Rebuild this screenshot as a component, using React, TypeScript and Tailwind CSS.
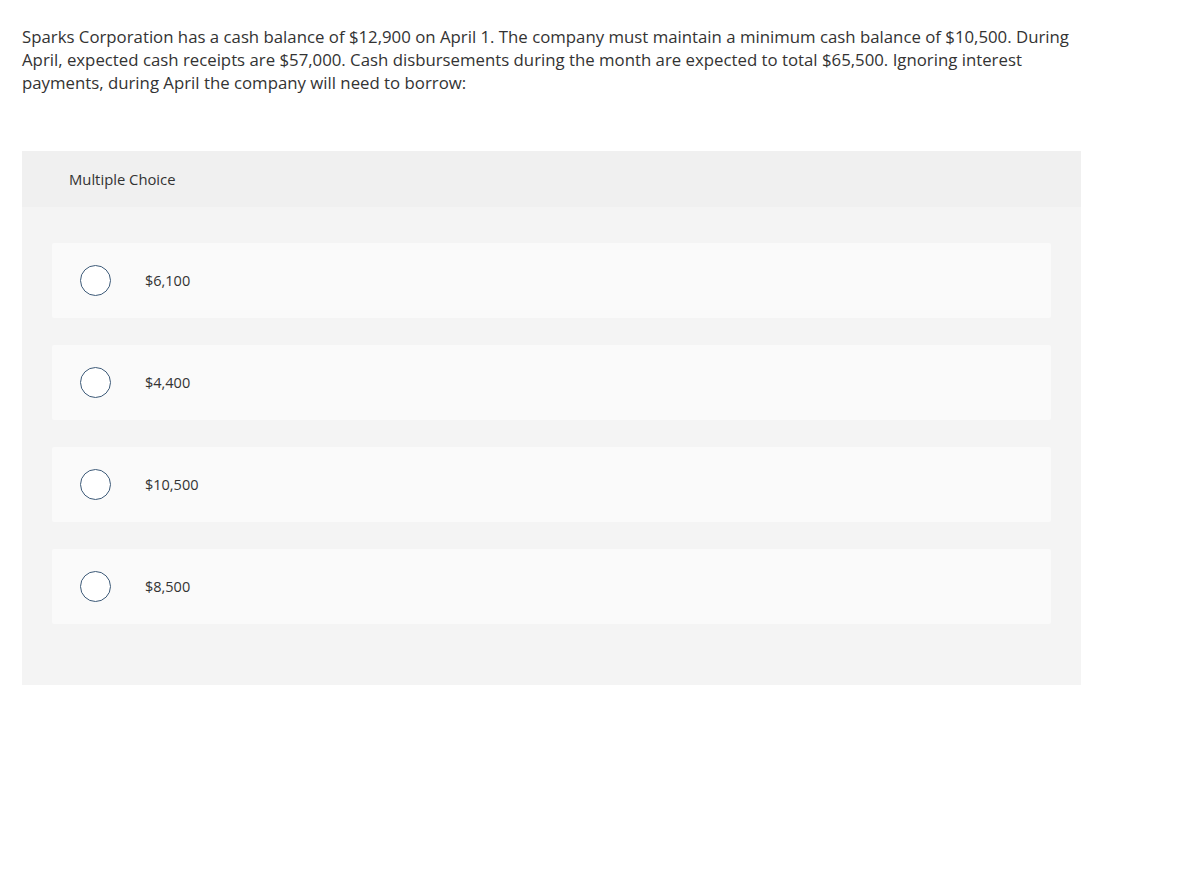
import React from 'react';

const options = ['$6,100', '$4,400', '$10,500', '$8,500'];

export default function App() {
  return (
    <div className="min-h-screen bg-white text-[#333] font-['Open_Sans',sans-serif]">
      <div className="pl-[22px] pr-[60px] pt-[25px]">
        <p className="text-[16.8px] leading-[23px] whitespace-nowrap">
          Sparks Corporation has a cash balance of $12,900 on April 1. The company must maintain a minimum cash balance of $10,500. During
          <br />
          April, expected cash receipts are $57,000. Cash disbursements during the month are expected to total $65,500. Ignoring interest
          <br />
          payments, during April the company will need to borrow:
        </p>
      </div>

      <div className="ml-[22px] mt-[57px] w-[1059px] bg-[#f4f4f4]">
        <div className="h-[56px] bg-[#f0f0f0] flex items-center pl-[47px] text-[14.8px]">Multiple Choice</div>
        <div className="px-[30px] pt-[36px] pb-[61px] flex flex-col gap-[27px]">
          {options.map((opt) => (
            <label
              key={opt}
              className="h-[75px] bg-[#fafafa] rounded-[2px] flex items-center pl-[28px] cursor-pointer"
            >
              <span className="w-[31px] h-[31px] rounded-full border border-[#3d5a78] bg-white shrink-0" />
              <span className="ml-[34px] text-[14.5px]">{opt}</span>
            </label>
          ))}
        </div>
      </div>
    </div>
  );
}
